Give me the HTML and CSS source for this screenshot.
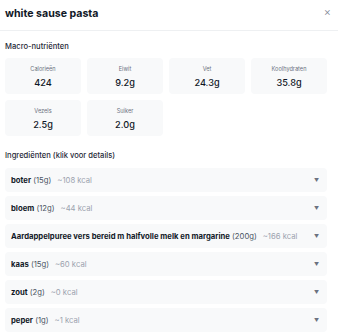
FILE: index.html
```html
<!DOCTYPE html>
<html>
<head>
<meta charset="utf-8">
<link rel="stylesheet" href="styles.css">
</head>
<body>
<div class="modal">
  <div class="header">
    <div class="title">white sause pasta</div>
    <div class="close">×</div>
  </div>
  <div class="content">
    <div class="section-title macro-title">Macro-nutriënten</div>
    <div class="grid">
      <div class="card"><div class="label">Calorieën</div><div class="value">424</div></div>
      <div class="card"><div class="label">Eiwit</div><div class="value">9.2g</div></div>
      <div class="card"><div class="label">Vet</div><div class="value">24.3g</div></div>
      <div class="card"><div class="label">Koolhydraten</div><div class="value">35.8g</div></div>
      <div class="card"><div class="label">Vezels</div><div class="value">2.5g</div></div>
      <div class="card"><div class="label">Suiker</div><div class="value">2.0g</div></div>
    </div>
    <div class="section-title ingr-title">Ingrediënten (klik voor details)</div>
    <div class="list">
      <div class="row"><div class="txt"><b>boter</b> <span class="qty">(15g)</span><span class="kcal">~108 kcal</span></div><span class="arrow">▼</span></div>
      <div class="row"><div class="txt"><b>bloem</b> <span class="qty">(12g)</span><span class="kcal">~44 kcal</span></div><span class="arrow">▼</span></div>
      <div class="row"><div class="txt"><b>Aardappelpuree vers bereid m halfvolle melk en margarine</b> <span class="qty">(200g)</span><span class="kcal">~166 kcal</span></div><span class="arrow">▼</span></div>
      <div class="row"><div class="txt"><b>kaas</b> <span class="qty">(15g)</span><span class="kcal">~60 kcal</span></div><span class="arrow">▼</span></div>
      <div class="row"><div class="txt"><b>zout</b> <span class="qty">(2g)</span><span class="kcal">~0 kcal</span></div><span class="arrow">▼</span></div>
      <div class="row"><div class="txt"><b>peper</b> <span class="qty">(1g)</span><span class="kcal">~1 kcal</span></div><span class="arrow">▼</span></div>
    </div>
  </div>
</div>
</body>
</html>
```
FILE: styles.css
```css
html, body {
  margin: 0;
  padding: 0;
  background: #fff;
}
body {
  font-family: "Inter", "Liberation Sans", sans-serif;
  color: #111827;
  overflow: hidden;
}
.header {
  height: 30px;
  display: flex;
  align-items: center;
  justify-content: space-between;
  padding: 0 7px 0 5px;
  border-bottom: 1px solid #eef0f2;
}
.title {
  font-size: 10.6px;
  font-weight: 700;
  margin-top: -4px;
}
.close {
  font-size: 11px;
  font-weight: 300;
  color: #7b8494;
  margin-top: -6px;
}
.content {
  padding: 0 11px 0 5px;
}
.section-title {
  font-size: 7.6px;
  font-weight: 500;
  color: #1f2937;
}
.macro-title {
  height: 27px;
  line-height: 31px;
}
.grid {
  display: grid;
  grid-template-columns: repeat(4, 1fr);
  gap: 6px;
}
.card {
  background: #f8f9fa;
  border-radius: 4px;
  height: 36px;
  display: flex;
  flex-direction: column;
  align-items: center;
}
.label {
  font-size: 5.6px;
  color: #6b7280;
  margin-top: 7px;
  line-height: 8px;
}
.value {
  font-size: 9.2px;
  font-weight: 500;
  margin-top: 3px;
  line-height: 13px;
  color: #111827;
}
.ingr-title {
  height: 32px;
  line-height: 39px;
}
.list {
  display: flex;
  flex-direction: column;
  gap: 4px;
}
.row {
  background: #f8f9fa;
  border-radius: 4px;
  height: 24px;
  display: flex;
  align-items: center;
  justify-content: space-between;
  padding: 0 6px;
  font-size: 7.7px;
}
.txt {
  white-space: nowrap;
}
.row b {
  font-weight: 700;
  color: #111827;
}
.qty {
  color: #4b5563;
}
.kcal {
  color: #9ca3af;
  margin-left: 6px;
}
.arrow {
  font-size: 5px;
  color: #6b7280;
  margin-right: 2px;
}
```
